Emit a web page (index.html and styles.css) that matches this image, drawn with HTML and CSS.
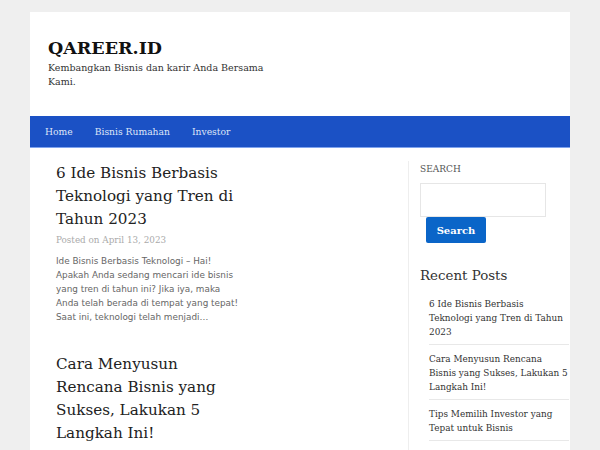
FILE: index.html
```html
<!DOCTYPE html>
<html>
<head>
	<title>QAREER.ID</title>
	<link rel="stylesheet" href="styles.css">
</head>
<body>
<div class="site">
	<header class="masthead">
		<h1 class="site-title">QAREER.ID</h1>
		<p class="tagline">Kembangkan Bisnis dan karir Anda Bersama Kami.</p>
	</header>
	<nav class="menu">
		<a href="#">Home</a>
		<a href="#">Bisnis Rumahan</a>
		<a href="#">Investor</a>
	</nav>
	<div class="content">
		<main class="posts">
			<article class="post">
				<h2>6 Ide Bisnis Berbasis Teknologi yang Tren di Tahun 2023</h2>
				<p class="meta">Posted on April 13, 2023</p>
				<p class="excerpt">Ide Bisnis Berbasis Teknologi – Hai! Apakah Anda sedang mencari ide bisnis yang tren di tahun ini? Jika iya, maka Anda telah berada di tempat yang tepat! Saat ini, teknologi telah menjadi…</p>
			</article>
			<article class="post">
				<h2>Cara Menyusun Rencana Bisnis yang Sukses, Lakukan 5 Langkah Ini!</h2>
				<p class="meta">Posted on April 13, 2023</p>
			</article>
		</main>
		<aside class="sidebar">
			<h4 class="widget-label">SEARCH</h4>
			<form class="search">
				<input type="text">
				<button type="button">Search</button>
			</form>
			<h3 class="widget-title">Recent Posts</h3>
			<ul class="recent">
				<li><a href="#">6 Ide Bisnis Berbasis Teknologi yang Tren di Tahun 2023</a></li>
				<li><a href="#">Cara Menyusun Rencana Bisnis yang Sukses, Lakukan 5 Langkah Ini!</a></li>
				<li><a href="#">Tips Memilih Investor yang Tepat untuk Bisnis</a></li>
				<li><a href="#">10+ Bisnis Kreatif yang Bisa Anda Coba</a></li>
			</ul>
		</aside>
	</div>
</div>
</body>
</html>
```

FILE: styles.css
```css
*{
	padding: 0px;
	margin: 0px;
	box-sizing: border-box;
}
body{
	background-color: #efefef;
	font-family: "DejaVu Serif", serif;
	color: #222;
	padding-top: 12px;
}
a{
	text-decoration: none;
	color: inherit;
}
.site{
	width: 540px;
	margin: 0 auto;
	background-color: #fff;
	height: 440px;
	overflow: hidden;
}
.masthead{
	padding: 24px 18px 0 18px;
	height: 104px;
}
.site-title{
	font-size: 17.5px;
	font-weight: bold;
	color: #111;
	line-height: 24px;
}
.tagline{
	width: 222px;
	font-size: 9.5px;
	line-height: 14px;
	margin-top: 1px;
	color: #333;
}
.menu{
	display: flex;
	background-color: #1b51c5;
	border-bottom: 1px solid #7fa3ee;
	height: 32px;
	align-items: center;
	padding-left: 4px;
}
.menu a{
	color: #dfe6f7;
	font-size: 9.2px;
	padding: 0 11px;
}
.content{
	display: flex;
}
.posts{
	width: 378px;
	padding: 14px 26px 0 26px;
}
.post{
	width: 184px;
	margin-bottom: 29px;
}
.post h2{
	font-size: 15.2px;
	font-weight: normal;
	line-height: 23px;
	color: #222;
}
.meta{
	font-size: 8.8px;
	color: #aaa;
	margin-top: 4px;
}
.excerpt{
	font-family: "DejaVu Sans", sans-serif;
	font-size: 8.85px;
	line-height: 14px;
	color: #666;
	margin-top: 9px;
}
.sidebar{
	margin-top: 13px;
	border-left: 1px solid #eee;
	padding: 0 0 0 11px;
	width: 162px;
}
.widget-label{
	font-size: 9px;
	font-weight: normal;
	color: #555;
	margin-top: 3px;
}
.search{
	margin-top: 9px;
}
.search input{
	display: block;
	width: 126px;
	height: 34px;
	border: 1px solid #e6e6e6;
	background-color: transparent;
}
.search button{
	margin-left: 6px;
	background-color: #0a65c8;
	color: #fff;
	border: none;
	border-radius: 2px;
	font-family: "DejaVu Serif", serif;
	font-weight: bold;
	font-size: 10px;
	width: 60px;
	height: 26px;
}
.widget-title{
	font-size: 13.4px;
	font-weight: normal;
	color: #333;
	margin-top: 25px;
}
.recent{
	list-style: none;
	margin: 7px 0 0 9px;
	width: 140px;
}
.recent li{
	font-size: 8.9px;
	line-height: 14px;
	color: #333;
	padding: 7px 0 5px 0;
	border-bottom: 1px solid #e8e8e8;
}
```
